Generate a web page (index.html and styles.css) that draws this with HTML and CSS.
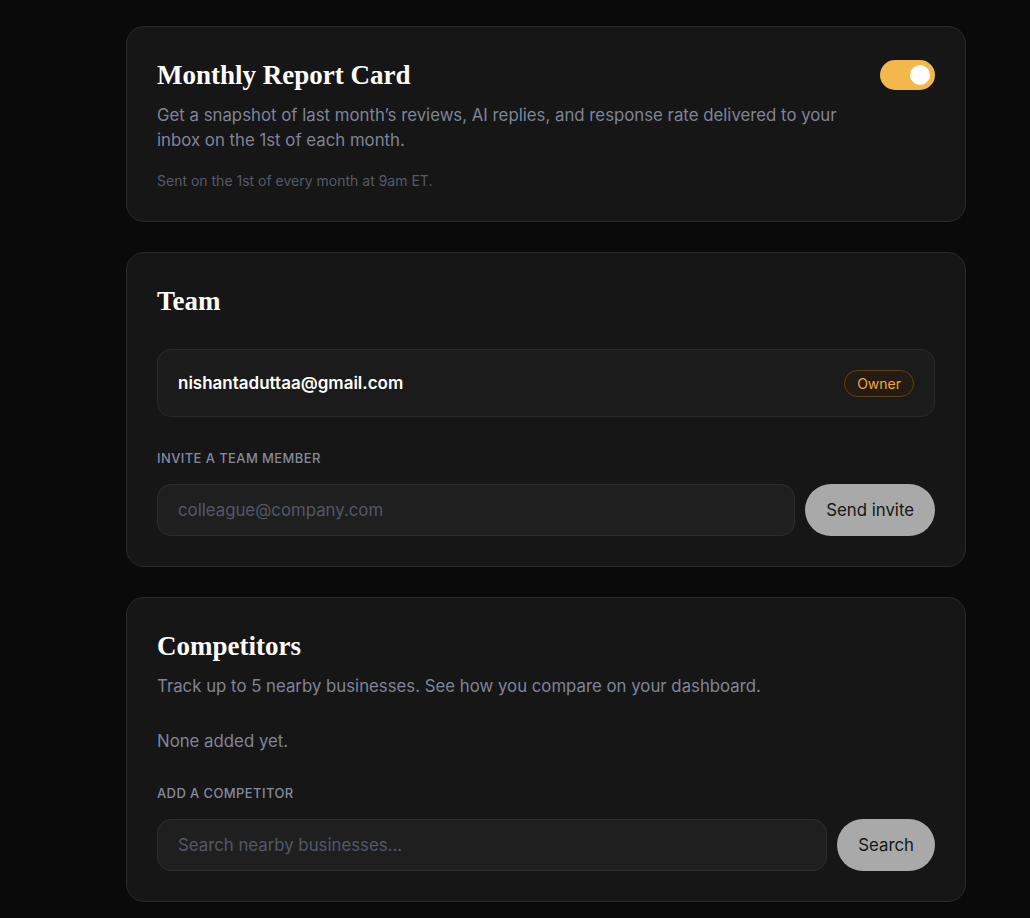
FILE: index.html
```html
<!DOCTYPE html>
<html lang="en">
<head>
<meta charset="utf-8">
<title>Settings</title>
<link rel="stylesheet" href="styles.css">
</head>
<body>
<main class="page">
  <section class="card">
    <div class="card-head">
      <div class="head-text">
        <h2 class="card-title">Monthly Report Card</h2>
        <p class="desc">Get a snapshot of last month’s reviews, AI replies, and response rate delivered to your inbox on the 1st of each month.</p>
      </div>
      <button class="toggle" aria-label="Monthly report enabled"><span class="knob"></span></button>
    </div>
    <p class="note">Sent on the 1st of every month at 9am ET.</p>
  </section>

  <section class="card">
    <h2 class="card-title">Team</h2>
    <div class="member">
      <span class="member-email">nishantaduttaa@gmail.com</span>
      <span class="badge">Owner</span>
    </div>
    <div class="label">INVITE A TEAM MEMBER</div>
    <div class="field-row">
      <input class="field" type="text" placeholder="colleague@company.com">
      <button class="btn">Send invite</button>
    </div>
  </section>

  <section class="card">
    <h2 class="card-title">Competitors</h2>
    <p class="desc">Track up to 5 nearby businesses. See how you compare on your dashboard.</p>
    <p class="empty">None added yet.</p>
    <div class="label label-tight">ADD A COMPETITOR</div>
    <div class="field-row">
      <input class="field" type="text" placeholder="Search nearby businesses...">
      <button class="btn">Search</button>
    </div>
  </section>
</main>
</body>
</html>
```

FILE: styles.css
```css
* { box-sizing: border-box; }
html, body { margin: 0; padding: 0; }
body {
  background: #0a0a0a;
  font-family: Inter, "Noto Sans", sans-serif;
  color: #e8e8ea;
  min-height: 918px;
}
.page {
  width: 840px;
  margin-left: 126px;
  padding-top: 26px;
  display: flex;
  flex-direction: column;
  gap: 30px;
}
.card {
  background: #161616;
  border: 1px solid #2a2a2a;
  border-radius: 18px;
  padding: 30px;
}
.card-head {
  display: flex;
  justify-content: space-between;
  align-items: flex-start;
}
.head-text { max-width: 700px; }
.card-title {
  margin: 0;
  font-family: "Liberation Serif", "Times New Roman", serif;
  font-weight: 700;
  font-size: 27px;
  line-height: 36px;
  color: #ffffff;
}
.desc {
  margin: 10px 0 0;
  font-size: 16.8px;
  line-height: 25px;
  color: #7f8498;
}
.note {
  margin: 18px 0 0;
  font-size: 14px;
  line-height: 20px;
  color: #555a6a;
}
.toggle {
  width: 55px;
  height: 30px;
  border: 0;
  border-radius: 15px;
  background: #f3b74c;
  padding: 0 5px;
  margin-top: 3px;
  display: flex;
  justify-content: flex-end;
  align-items: center;
  flex-shrink: 0;
}
.knob {
  width: 20px;
  height: 20px;
  border-radius: 50%;
  background: #ffffff;
}
.member {
  margin-top: 30px;
  height: 68px;
  background: #1b1b1b;
  border: 1px solid #2a2a2a;
  border-radius: 14px;
  padding: 0 20px;
  display: flex;
  align-items: center;
  justify-content: space-between;
}
.member-email {
  font-size: 17px;
  font-weight: 600;
  color: #ffffff;
}
.badge {
  height: 27px;
  padding: 0 12px;
  border: 1px solid #5e4219;
  background: #241c12;
  color: #f2a53a;
  border-radius: 14px;
  font-size: 14px;
  display: flex;
  align-items: center;
}
.label {
  margin-top: 31px;
  font-size: 13px;
  line-height: 20px;
  letter-spacing: 0.4px;
  color: #858a9c;
  font-weight: 500;
}
.label-tight { margin-top: 29px; }
.field-row {
  margin-top: 16px;
  display: flex;
  gap: 10px;
}
.field {
  flex: 1;
  height: 52px;
  background: #1f1f1f;
  border: 1px solid #2e2e2e;
  border-radius: 14px;
  padding: 0 20px;
  font-family: inherit;
  font-size: 16.8px;
  color: #e8e8ea;
  outline: none;
}
.field::placeholder { color: #535868; }
.btn {
  height: 52px;
  border: 0;
  border-radius: 26px;
  background: #a9a9a9;
  color: #161616;
  font-family: inherit;
  font-size: 16.8px;
  padding: 0 21px;
}
.empty {
  margin: 30px 0 0;
  font-size: 16.8px;
  line-height: 25px;
  color: #7f8498;
}
```
